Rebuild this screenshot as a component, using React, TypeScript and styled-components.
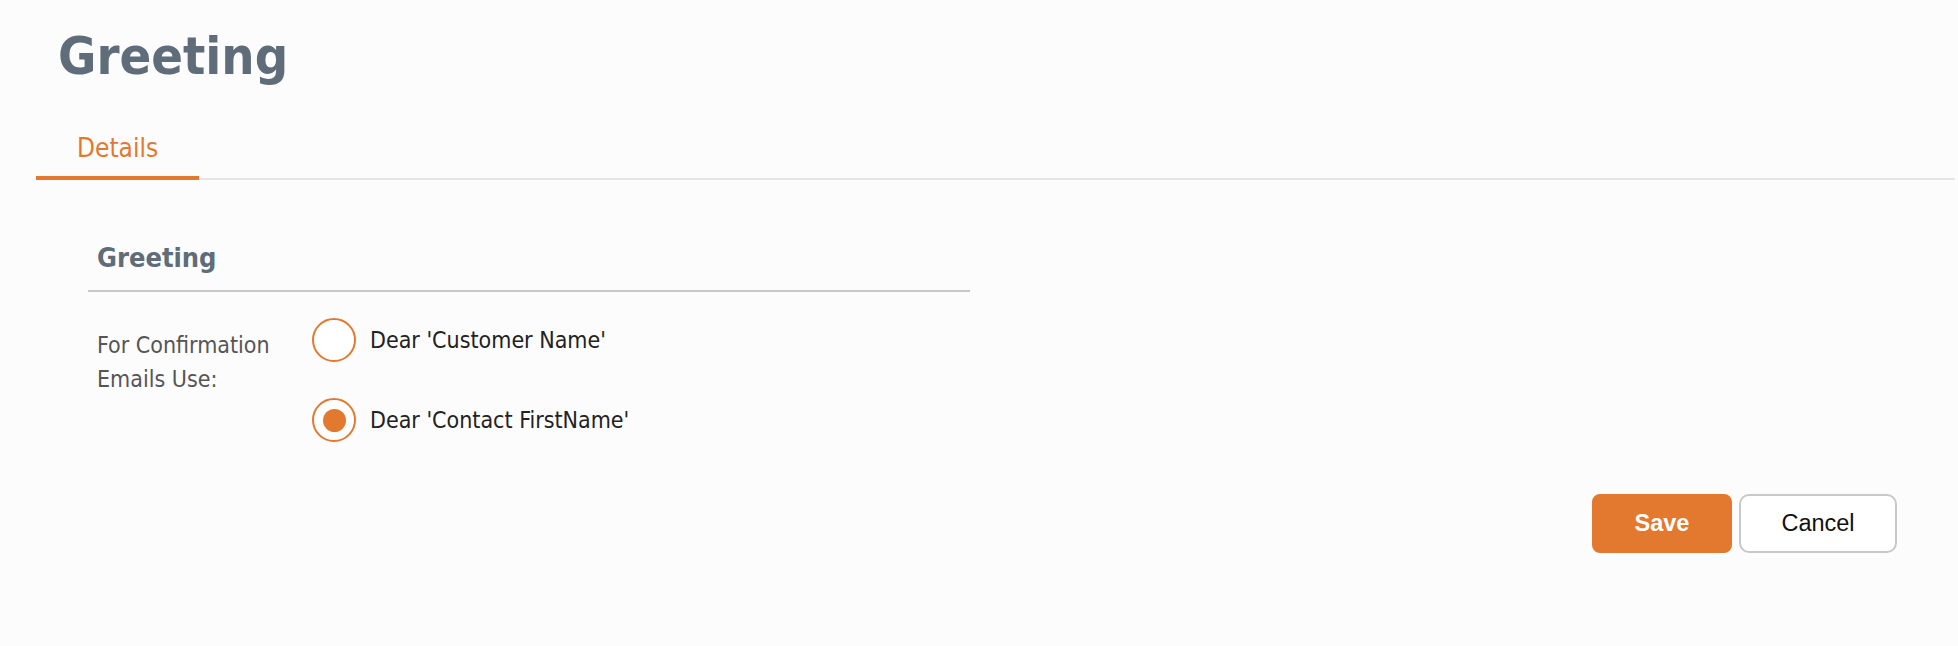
import styled, { createGlobalStyle } from 'styled-components';

const GlobalStyle = createGlobalStyle`
	html, body {
		margin: 0;
		padding: 0;
		background: #fcfcfc;
	}

	body {
		font-family: "DejaVu Sans Condensed", "DejaVu Sans", Verdana, sans-serif;
		font-stretch: condensed;
	}
`;

const orange = '#e2792f';

const Page = styled.div`
	display: flex;
	flex-direction: column;
	min-height: 646px;
`;

const Title = styled.h1`
	margin: 24px 0 0 58px;
	font-size: 52px;
	line-height: 64px;
	font-weight: 700;
	color: #5f6c79;
`;

const Tabs = styled.div`
	display: flex;
	margin: 44px 3px 0 36px;
	border-bottom: 2px solid #e6e6e6;
`;

const Tab = styled.div<{ $active?: boolean }>`
	padding: 0 41px 12px;
	margin-bottom: -2px;
	font-size: 26px;
	line-height: 32px;
	color: ${(props) => (props.$active ? orange : '#555')};
	border-bottom: 4px solid ${(props) => (props.$active ? orange : 'transparent')};
`;

const Section = styled.section`
	width: 882px;
	margin: 61px 0 0 88px;
`;

const SectionTitle = styled.h2`
	margin: 0;
	padding: 0 0 15px 9px;
	font-size: 27px;
	line-height: 34px;
	font-weight: 700;
	color: #5f6c79;
	border-bottom: 2px solid #c8c8c8;
`;

const FieldRow = styled.div`
	display: flex;
	align-items: flex-start;
	margin-top: 26px;
	padding-left: 9px;
`;

const FieldLabel = styled.div`
	width: 215px;
	margin-top: 10px;
	font-size: 23px;
	line-height: 34px;
	color: #555;
`;

const RadioGroup = styled.div`
	display: flex;
	flex-direction: column;
	gap: 36px;
`;

const RadioOption = styled.label`
	display: flex;
	align-items: center;
	gap: 14px;
	height: 44px;
	cursor: pointer;
`;

const RadioCircle = styled.span<{ $checked?: boolean }>`
	box-sizing: border-box;
	display: flex;
	align-items: center;
	justify-content: center;
	width: 44px;
	height: 44px;
	border: 2px solid ${orange};
	border-radius: 50%;
	background: #fff;

	&::after {
		content: '';
		display: ${(props) => (props.$checked ? 'block' : 'none')};
		width: 23px;
		height: 23px;
		border-radius: 50%;
		background: ${orange};
	}
`;

const RadioText = styled.span`
	font-size: 23px;
	line-height: 44px;
	color: #222;
`;

const Actions = styled.div`
	display: flex;
	justify-content: flex-end;
	gap: 7px;
	margin-top: 52px;
	padding-right: 61px;
`;

const Button = styled.button<{ $primary?: boolean }>`
	box-sizing: border-box;
	height: 59px;
	width: ${(props) => (props.$primary ? '140px' : '158px')};
	font-family: "Liberation Sans", Arial, sans-serif;
	font-size: 23.5px;
	font-weight: ${(props) => (props.$primary ? 700 : 400)};
	color: ${(props) => (props.$primary ? '#fff' : '#111')};
	background: ${(props) => (props.$primary ? orange : '#fff')};
	border: 2px solid ${(props) => (props.$primary ? orange : '#c8c8c8')};
	border-radius: ${(props) => (props.$primary ? '8px' : '10px')};
	cursor: pointer;
`;

const options = [
	{ label: "Dear 'Customer Name'", checked: false },
	{ label: "Dear 'Contact FirstName'", checked: true },
];

const App = () => {
	return (
		<Page>
			<GlobalStyle />
			<Title>Greeting</Title>
			<Tabs>
				<Tab $active>Details</Tab>
			</Tabs>
			<Section>
				<SectionTitle>Greeting</SectionTitle>
				<FieldRow>
					<FieldLabel>
						For Confirmation
						<br />
						Emails Use:
					</FieldLabel>
					<RadioGroup>
						{options.map((item, i) => (
							<RadioOption key={i}>
								<RadioCircle $checked={item.checked} />
								<RadioText>{item.label}</RadioText>
							</RadioOption>
						))}
					</RadioGroup>
				</FieldRow>
			</Section>
			<Actions>
				<Button $primary>Save</Button>
				<Button>Cancel</Button>
			</Actions>
		</Page>
	);
};

export default App;
